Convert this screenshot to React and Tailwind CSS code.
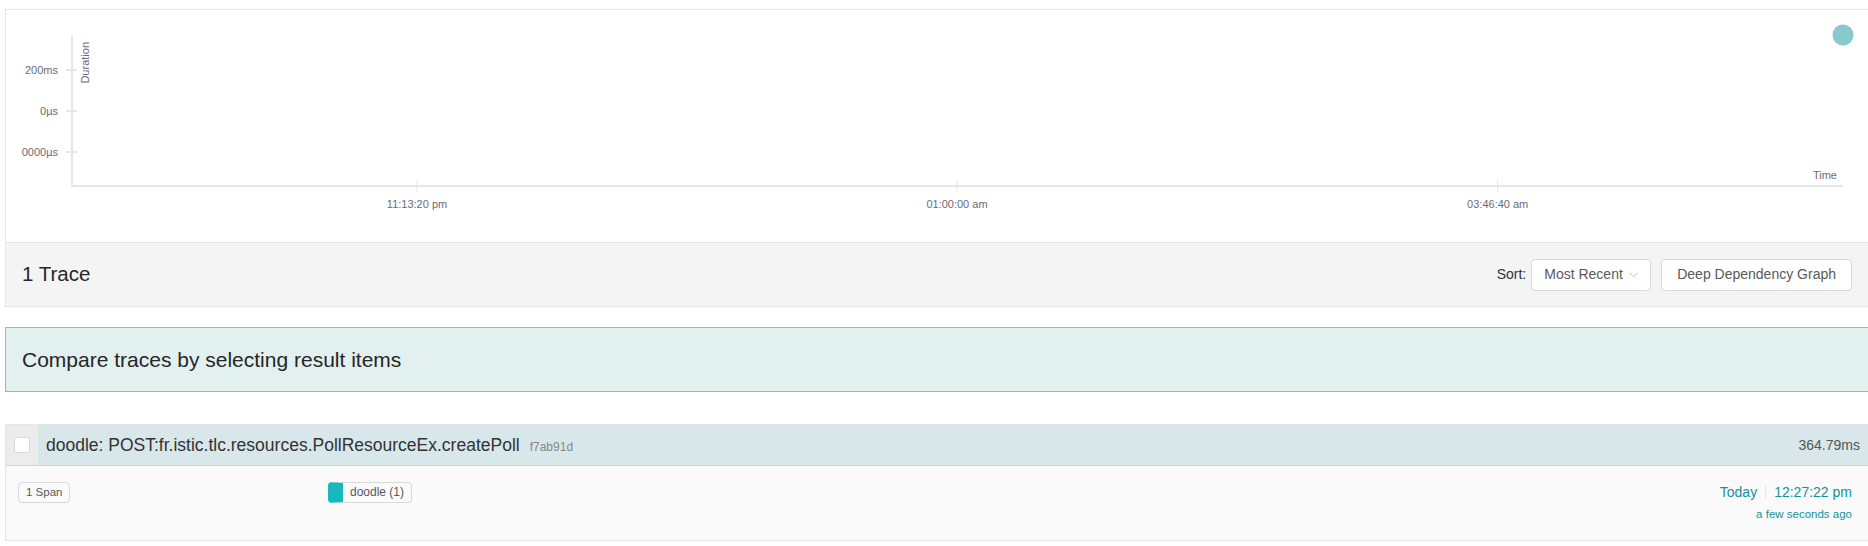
import React from "react";

function ScatterPlot() {
  const yTicks = [
    { y: 60, label: "200ms" },
    { y: 101, label: "0µs" },
    { y: 142, label: "0000µs" },
  ];
  const xTicks = [
    { x: 411, label: "11:13:20 pm" },
    { x: 951, label: "01:00:00 am" },
    { x: 1491.7, label: "03:46:40 am" },
  ];
  return (
    <svg width="1862" height="232" className="block">
      <line x1="66" y1="26" x2="66" y2="177" stroke="#e6e6e6" strokeWidth="2" />
      <line x1="65" y1="176" x2="1837" y2="176" stroke="#e6e6e6" strokeWidth="2" />
      {yTicks.map((t) => (
        <g key={t.label}>
          <line x1="60" y1={t.y} x2="71" y2={t.y} stroke="#e6e6e6" strokeWidth="2" />
          <text x="52" y={t.y} fontSize="11" fill="#6b6b76" textAnchor="end" dominantBaseline="central">
            {t.label}
          </text>
        </g>
      ))}
      {xTicks.map((t) => (
        <g key={t.label}>
          <line x1={t.x} y1="170" x2={t.x} y2="182" stroke="#e6e6e6" strokeWidth="1" />
          <text x={t.x} y="194" fontSize="11" fill="#6b6b76" textAnchor="middle" dominantBaseline="central">
            {t.label}
          </text>
        </g>
      ))}
      <text transform="translate(83,32) rotate(-90)" fontSize="11" fill="#6b6b76" textAnchor="end">
        Duration
      </text>
      <text x="1831" y="165" fontSize="11" fill="#6b6b76" textAnchor="end" dominantBaseline="central">
        Time
      </text>
      <circle cx="1837" cy="25" r="10.5" fill="#12939a" opacity="0.5" />
    </svg>
  );
}

export default function App() {
  return (
    <div className="w-[1868px] h-[546px] overflow-hidden bg-white font-['Liberation_Sans',Arial,sans-serif]">
      <div className="pl-[5px] pt-[9px]">
        {/* Search results header with scatter plot */}
        <div className="border-l border-t border-b border-[#e6e6e6]">
          <div className="h-[232px] bg-white">
            <ScatterPlot />
          </div>
          <div className="h-[64px] bg-[#f4f4f4] border-t border-[#e6e6e6] flex items-center pl-4 pr-4">
            <h2 className="flex-1 m-0 text-[20.5px] font-normal text-[#262626]">1 Trace</h2>
            <div className="flex items-center">
              <span className="text-[14px] text-[#333] mr-[5px]">Sort:</span>
              <div className="w-[120px] h-[32px] bg-white border border-[#d9d9d9] rounded flex items-center justify-between pl-3 pr-3">
                <span className="text-[14px] text-[#595959]">Most Recent</span>
                <svg width="9" height="6" viewBox="0 0 9 6" className="block">
                  <path d="M0.5 0.8 L4.5 4.8 L8.5 0.8" fill="none" stroke="#bfbfbf" strokeWidth="1" />
                </svg>
              </div>
              <button className="ml-[10px] h-[32px] px-[15px] bg-white border border-[#d9d9d9] rounded text-[14px] text-[#595959]">
                Deep Dependency Graph
              </button>
            </div>
          </div>
        </div>

        {/* Diff selection message */}
        <div className="mt-5 h-[65px] border border-r-0 border-[#80c5c1] bg-[#e2f0ef] flex items-center pl-4 text-[21px] text-[#262626]">
          Compare traces by selecting result items
        </div>

        {/* Result item */}
        <div className="mt-8 border border-r-0 border-[#e6e6e6]">
          <div className="flex h-[41px] bg-[#ececec] border-b border-[#d3d3d3]">
            <div className="w-[32px] flex items-center justify-center">
              <div className="w-[16px] h-[16px] bg-white border border-[#d9d9d9] rounded-[2px]" />
            </div>
            <div className="flex-1 bg-[#d7e7ea] flex items-center justify-between pl-2 pr-2">
              <div className="flex items-baseline">
                <span className="text-[17.5px] text-[#333]">doodle: POST:fr.istic.tlc.resources.PollResourceEx.createPoll</span>
                <span className="text-[12px] text-[#888] pl-[10px]">f7ab91d</span>
              </div>
              <span className="text-[14px] text-[#555]">364.79ms</span>
            </div>
          </div>
          <div className="h-[74px] bg-[#fafafa] flex">
            <div className="w-[322px] pl-3 pt-[13px]">
              <span className="inline-block border border-[#d9d9d9] rounded bg-[#fafafa] px-[7px] text-[11.5px] leading-[19px] text-[#595959]">
                1 Span
              </span>
            </div>
            <div className="flex-1 pt-[13px]">
              <span className="inline-block border border-[#d9d9d9] border-l-[15px] border-l-[#17b8be] rounded bg-[#fafafa] px-[7px] text-[12px] leading-[19px] text-[#595959]">
                doodle (1)
              </span>
            </div>
            <div className="pr-4 pt-4 flex flex-col items-end text-[#11939a]">
              <div className="flex items-center text-[14px] leading-[20px]">
                <span>Today</span>
                <span className="mx-2 w-px h-[14px] bg-[#e8e8e8]" />
                <span>12:27:22 pm</span>
              </div>
              <div className="mt-[3px] text-[11.5px] leading-[18px]">a few seconds ago</div>
            </div>
          </div>
        </div>
      </div>
    </div>
  );
}
